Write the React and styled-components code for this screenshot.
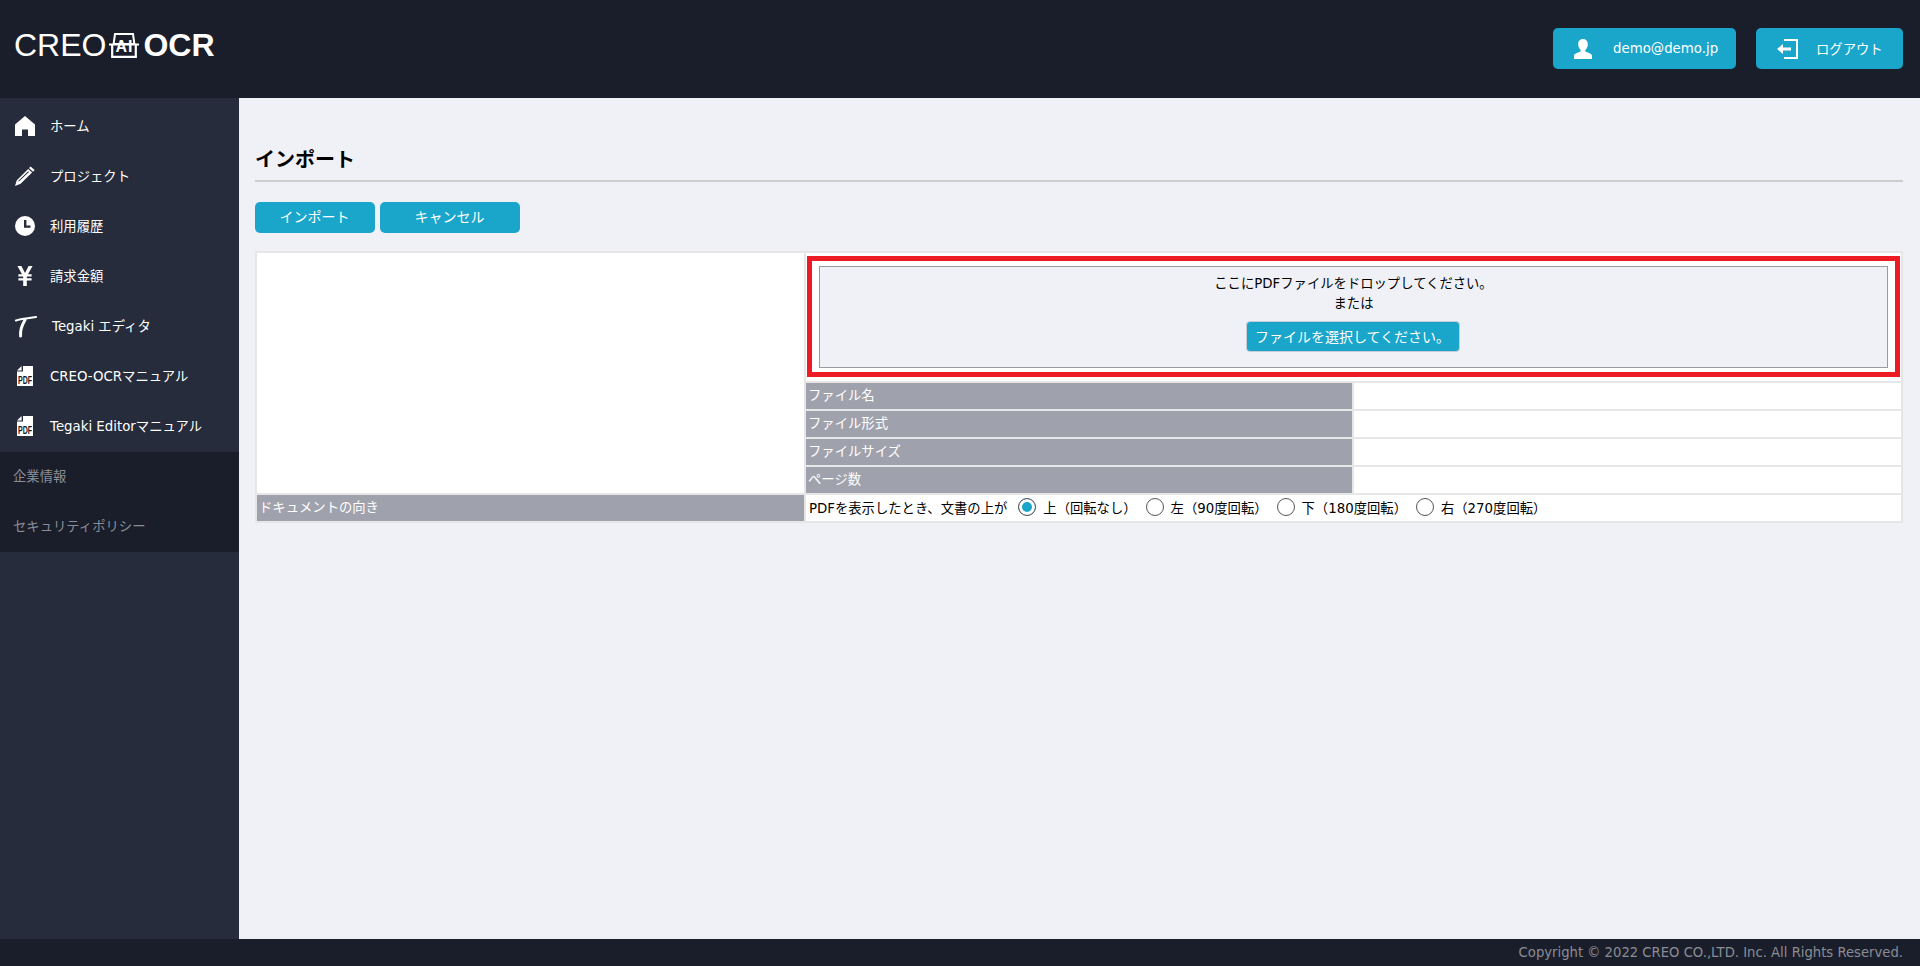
import React from 'react';
import styled, { createGlobalStyle } from 'styled-components';

const FONT = `"DejaVu Sans", "Noto Sans CJK JP", sans-serif`;

const GlobalStyle = createGlobalStyle`
  html, body {
    margin: 0;
    padding: 0;
    height: 100%;
  }
  body {
    font-family: ${FONT};
    font-size: 13.33px;
    background: #f0f1f6;
    color: #000;
  }
  * {
    box-sizing: border-box;
  }
`;

function HomeIcon() {
  return (
    <svg width="20" height="20" viewBox="0 0 20 20" fill="#fff">
      <path d="M10 0 L20 8.5 V20 H13 V13.5 H7 V20 H0 V8.5 Z" />
    </svg>
  );
}

function PencilIcon() {
  return (
    <svg width="20" height="20" viewBox="0 0 20 20" fill="#fff">
      <path d="M15.6 0.4 L19.6 4 L18 5.7 L14 2 Z" />
      <path d="M13.2 2.9 L17.1 6.6 L5.6 17.8 L0 20 L1.8 14.2 Z M13.2 5.3 L3.2 14.9 L3.9 15.5 L13.9 5.9 Z" fillRule="evenodd" />
    </svg>
  );
}

function ClockIcon() {
  return (
    <svg width="20" height="20" viewBox="0 0 20 20">
      <circle cx="10" cy="10" r="10" fill="#fff" />
      <path d="M9 4 H11.4 V9.4 H15.5 V11.8 H9 Z" fill="#262c3c" />
    </svg>
  );
}

function YenIcon() {
  return (
    <svg width="20" height="20" viewBox="0 0 20 20" fill="#fff">
      <path d="M2.4 0 H6.4 L10 7 L13.6 0 H17.6 L13 8.2 H16.6 V10.6 H11.8 V12.2 H16.6 V14.6 H11.8 V20 H8.2 V14.6 H3.4 V12.2 H8.2 V10.6 H3.4 V8.2 H7 Z" />
    </svg>
  );
}

function TegakiIcon() {
  return (
    <svg width="24" height="24" viewBox="0 0 24 24" fill="none" stroke="#fff" strokeLinecap="round">
      <path d="M2 6.5 C8 4.6 15 4.4 22 3" strokeWidth="2.2" />
      <path d="M11 6 C8 11 6 16 6.6 22" strokeWidth="3" />
    </svg>
  );
}

function PdfIcon() {
  return (
    <svg width="20" height="24" viewBox="-2 -2 20 24">
      <path d="M6 0 H16 V20 H0 V5.4 H6 Z" fill="#fff" />
      <path d="M0 4.4 L4.6 0 V4.4 Z" fill="#fff" />
      <text transform="translate(8 17.8) scale(0.88 1.25)" textAnchor="middle" fontFamily='"Liberation Sans", sans-serif' fontSize="8" fontWeight="700" fill="#16181f">PDF</text>
    </svg>
  );
}

function UserIcon() {
  return (
    <svg width="18" height="20" viewBox="0 0 18 20" fill="#fff">
      <path d="M9 0 C12 0 13.8 2.2 13.8 5.2 C13.8 8 12.4 10 11.4 11 V12.6 C13.6 13.6 18 14.6 18 17 V20 H0 V17 C0 14.6 4.4 13.6 6.6 12.6 V11 C5.6 10 4.2 8 4.2 5.2 C4.2 2.2 6 0 9 0 Z" />
    </svg>
  );
}

function LogoutIcon() {
  return (
    <svg width="21" height="20" viewBox="0 0 21 20" fill="#fff">
      <path d="M7 0 H21 V20 H7 V18 H19 V2 H7 Z" />
      <path d="M0 10 L6 5 V8.4 H14 V11.6 H6 V15 Z" />
    </svg>
  );
}

function LogoIcon() {
  return (
    <LogoMark width="30" height="25" viewBox="0 0 30 25">
      <path d="M6 1 H24 L25.4 11 H4.6 Z" fill="none" stroke="#fff" strokeWidth="2" />
      <path d="M3.2 12 V23.8 H26.8 V12" fill="none" stroke="#fff" strokeWidth="2.2" />
      <text x="15.5" y="18.6" textAnchor="middle" fontFamily='"Liberation Sans", sans-serif' fontSize="16" fontWeight="700" letterSpacing="1" fill="#fff">AI</text>
      <path d="M0 11.5 H30" stroke="#fff" strokeWidth="2" />
    </LogoMark>
  );
}

const NAV_ITEMS = [
  { label: 'ホーム', icon: <HomeIcon /> },
  { label: 'プロジェクト', icon: <PencilIcon /> },
  { label: '利用履歴', icon: <ClockIcon /> },
  { label: '請求金額', icon: <YenIcon /> },
  { label: 'Tegaki エディタ', icon: <TegakiIcon /> },
  { label: 'CREO-OCRマニュアル', icon: <PdfIcon /> },
  { label: 'Tegaki Editorマニュアル', icon: <PdfIcon /> },
];

const ORIENTATIONS = [
  { label: '上（回転なし）', checked: true },
  { label: '左（90度回転）' },
  { label: '下（180度回転）' },
  { label: '右（270度回転）' },
];

const FILE_ROWS = ['ファイル名', 'ファイル形式', 'ファイルサイズ', 'ページ数'];

function App() {
  return (
    <Page>
      <GlobalStyle />
      <Header>
        <Logo>
          <LogoLight>CREO</LogoLight>
          <LogoIcon />
          <LogoBold>OCR</LogoBold>
        </Logo>
        <HeaderActions>
          <HeaderButton $width={183} $gap={21}>
            <UserIcon />
            demo@demo.jp
          </HeaderButton>
          <HeaderButton $width={147} $gap={18}>
            <LogoutIcon />
            ログアウト
          </HeaderButton>
        </HeaderActions>
      </Header>

      <Body>
        <Sidebar>
          <NavList>
            {NAV_ITEMS.map((item) => (
              <NavItem key={item.label}>
                <NavIcon>{item.icon}</NavIcon>
                {item.label}
              </NavItem>
            ))}
          </NavList>
          <SubNav>
            <SubNavItem>企業情報</SubNavItem>
            <SubNavItem>セキュリティポリシー</SubNavItem>
          </SubNav>
        </Sidebar>

        <Main>
          <Title>インポート</Title>
          <ActionRow>
            <ActionButton $width={120}>インポート</ActionButton>
            <ActionButton $width={140}>キャンセル</ActionButton>
          </ActionRow>

          <ImportTable>
            <colgroup>
              <col style={{ width: 547 }} />
              <col style={{ width: 546 }} />
              <col style={{ width: 547 }} />
            </colgroup>
            <tbody>
              <tr>
                <PreviewCell rowSpan={5} />
                <DropCell colSpan={2}>
                  <DropHighlight>
                    <DropZone>
                      <DropText>ここにPDFファイルをドロップしてください。</DropText>
                      <DropText>または</DropText>
                      <SelectButton>ファイルを選択してください。</SelectButton>
                    </DropZone>
                  </DropHighlight>
                </DropCell>
              </tr>
              {FILE_ROWS.map((label) => (
                <tr key={label}>
                  <LabelCell>{label}</LabelCell>
                  <ValueCell />
                </tr>
              ))}
              <tr>
                <LabelCell>ドキュメントの向き</LabelCell>
                <ValueCell colSpan={2}>
                  <OrientationRow>
                    <OrientationLead>PDFを表示したとき、文書の上が</OrientationLead>
                    {ORIENTATIONS.map((option) => (
                      <RadioOption key={option.label}>
                        <RadioMark $checked={option.checked} />
                        {option.label}
                      </RadioOption>
                    ))}
                  </OrientationRow>
                </ValueCell>
              </tr>
            </tbody>
          </ImportTable>
        </Main>
      </Body>

      <Footer>Copyright © 2022 CREO CO.,LTD. Inc. All Rights Reserved.</Footer>
    </Page>
  );
}

const Page = styled.div`
  display: flex;
  flex-direction: column;
  height: 966px;
  overflow: hidden;
`;

const Header = styled.header`
  flex: 0 0 98px;
  display: flex;
  align-items: flex-start;
  justify-content: space-between;
  padding: 28px 17px 0 14px;
  background: #1a1e2a;
`;

const Logo = styled.div`
  display: flex;
  align-items: center;
  height: 34px;
  color: #fff;
  font-family: 'Liberation Sans', sans-serif;
  font-size: 32px;
  line-height: 34px;
`;

const LogoLight = styled.span`
  font-weight: 400;
`;

const LogoBold = styled.span`
  font-weight: 700;
`;

const LogoMark = styled.svg`
  margin: 0 4px 0 3px;
`;

const HeaderActions = styled.div`
  display: flex;
  gap: 20px;
`;

const HeaderButton = styled.div`
  display: flex;
  align-items: center;
  gap: ${(p) => p.$gap}px;
  width: ${(p) => p.$width}px;
  height: 41px;
  padding-left: 21px;
  border-radius: 5px;
  background: #1aa5cb;
  color: #fff;
  font-size: 13.33px;
`;

const Body = styled.div`
  flex: 1;
  display: flex;
  min-height: 0;
`;

const Sidebar = styled.nav`
  flex: 0 0 239px;
  padding-top: 4px;
  background: #262c3c;
`;

const NavList = styled.div`
  display: flex;
  flex-direction: column;
`;

const NavItem = styled.div`
  display: flex;
  align-items: center;
  height: 50px;
  padding: 0 0 4px 14px;
  color: #fff;
  font-size: 13.33px;
`;

const NavIcon = styled.span`
  display: flex;
  align-items: center;
  justify-content: center;
  flex: 0 0 22px;
  height: 24px;
  margin: 2px 14px 0 0;
`;

const SubNav = styled.div`
  display: flex;
  flex-direction: column;
  background: #1a1e2a;
`;

const SubNavItem = styled.div`
  display: flex;
  align-items: center;
  height: 50px;
  padding: 0 0 4px 13px;
  color: #8a8d96;
  font-size: 13.33px;
`;

const Main = styled.main`
  flex: 1;
  min-width: 0;
  padding: 46px 17px 0 16px;
`;

const Title = styled.h2`
  margin: 0;
  height: 38px;
  border-bottom: 2px solid #cccccc;
  font-size: 20px;
  font-weight: 700;
  line-height: 33px;
`;

const ActionRow = styled.div`
  display: flex;
  gap: 5px;
  margin-top: 20px;
`;

const ActionButton = styled.div`
  display: flex;
  align-items: center;
  justify-content: center;
  width: ${(p) => p.$width}px;
  height: 31px;
  padding: 0 1px 3px 0;
  border-radius: 5px;
  background: #1aa5cb;
  color: #fff;
  font-size: 14px;
`;

const ImportTable = styled.table`
  table-layout: fixed;
  width: 1648px;
  margin-top: 18px;
  border-collapse: separate;
  border-spacing: 2px;
  background: #e6e6e6;
`;

const PreviewCell = styled.td`
  padding: 0;
  background: #fff;
`;

const DropCell = styled.td`
  height: 128px;
  padding: 3px 1px 4px 1px;
  background: #fff;
`;

const DropHighlight = styled.div`
  height: 121px;
  padding: 5px 7px 4px 7px;
  border: 5px solid #ed1c24;
`;

const DropZone = styled.div`
  display: flex;
  flex-direction: column;
  align-items: center;
  height: 102px;
  padding-top: 7px;
  border: 1px solid #9a9a9f;
  background: #f0f1f6;
`;

const DropText = styled.div`
  height: 20px;
  font-size: 13.33px;
  line-height: 20px;
`;

const SelectButton = styled.div`
  display: flex;
  align-items: center;
  justify-content: center;
  width: 214px;
  height: 31px;
  margin: 7px 2px 0 0;
  padding-bottom: 2px;
  border: 1px solid #c9ced6;
  border-radius: 4px;
  background: #1aa5cb;
  color: #fff;
  font-size: 14px;
`;

const LabelCell = styled.td`
  height: 26px;
  padding: 0 0 3px 2px;
  background: #9fa2ad;
  color: #fff;
  font-size: 13.33px;
`;

const ValueCell = styled.td`
  height: 26px;
  padding: 0 0 2px 3px;
  background: #fff;
  font-size: 13.33px;
`;

const OrientationRow = styled.div`
  display: flex;
  align-items: center;
`;

const OrientationLead = styled.span`
  margin-right: 11px;
`;

const RadioOption = styled.label`
  display: flex;
  align-items: center;
  gap: 7px;
  margin-right: 9px;
`;

const RadioMark = styled.span`
  display: block;
  width: 18px;
  height: 18px;
  border: 1px solid #555;
  border-radius: 50%;
  background: ${(p) => (p.$checked ? '#1aa5cb' : '#fff')};
  box-shadow: ${(p) => (p.$checked ? 'inset 0 0 0 3px #fff' : 'none')};
`;

const Footer = styled.footer`
  flex: 0 0 27px;
  display: flex;
  align-items: center;
  justify-content: flex-end;
  padding-right: 17px;
  background: #1a1e2a;
  color: #8a8d96;
  font-size: 13.2px;
`;

export default App;
